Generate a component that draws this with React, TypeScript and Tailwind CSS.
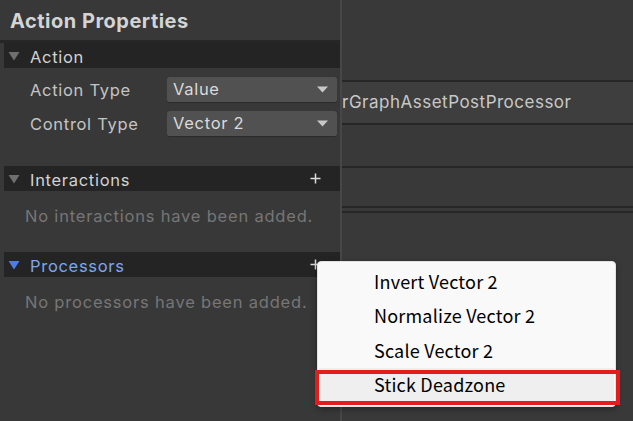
import React from "react";

const Tri = ({ color }: { color: string }) => (
  <svg width="12" height="10" viewBox="0 0 12 10" className="shrink-0">
    <path d="M0.5 1 L11.5 1 L6 9.5 Z" fill={color} />
  </svg>
);

const Plus = () => (
  <svg width="11" height="11" viewBox="0 0 11 11" className="shrink-0">
    <path d="M5.5 0.5 V10.5 M0.5 5.5 H10.5" stroke="#dcdcdc" strokeWidth="1.5" />
  </svg>
);

const SectionHeader = ({
  title,
  blue,
  plus,
}: {
  title: string;
  blue?: boolean;
  plus?: boolean;
}) => (
  <div className="ml-[4px] flex h-[25px] items-center bg-[#242424] pl-[4px] pr-[19px]">
    <Tri color={blue ? "#4c7de0" : "#6f6f6f"} />
    <span
      className={`ml-[10px] flex-1 pt-[3px] text-[16.5px] leading-none tracking-[0.7px] ${
        blue ? "text-[#7da6ee]" : "text-[#d2d2d2]"
      }`}
    >
      {title}
    </span>
    {plus && <Plus />}
  </div>
);

const Dropdown = ({ label, value }: { label: string; value: string }) => (
  <div className="flex h-[26px] items-center pl-[30px] pr-[3px]">
    <span className="w-[137px] text-[16.5px] tracking-[0.7px] text-[#c4c4c4]">{label}</span>
    <div className="flex h-[26px] flex-1 items-center justify-between rounded-[3px] border-b border-[#2a2a2a] bg-[#515151] pl-[6px] pr-[9px]">
      <span className="text-[16.5px] tracking-[0.7px] text-[#dadada]">{value}</span>
      <svg width="11" height="7" viewBox="0 0 11 7">
        <path d="M0 0.5 H11 L5.5 6.5 Z" fill="#c8c8c8" />
      </svg>
    </div>
  </div>
);

const items = ["Invert Vector 2", "Normalize Vector 2", "Scale Vector 2", "Stick Deadzone"];

export default function App() {
  return (
    <div
      className="relative flex h-[421px] w-[633px] overflow-hidden bg-[#383838]"
      style={{ fontFamily: "Inter, 'Noto Sans', sans-serif" }}
    >
      {/* left inspector */}
      <div className="flex w-[340px] shrink-0 flex-col">
        <div className="flex h-[40px] items-center pl-[10px] pt-[2px] text-[20px] font-bold tracking-[0.5px] text-[#d4d4d4]">
          Action Properties
        </div>
        <div className="h-[3px] bg-[#262626]" />
        <SectionHeader title="Action" />
        <div className="mt-[9px] flex flex-col gap-[8px]">
          <Dropdown label="Action Type" value="Value" />
          <Dropdown label="Control Type" value="Vector 2" />
        </div>
        <div className="mt-[29px]">
          <SectionHeader title="Interactions" plus />
        </div>
        <div className="flex h-[48px] items-center pl-[25px] pt-[2px] text-[16.5px] tracking-[0.8px] text-[#767676]">
          No interactions have been added.
        </div>
        <div className="mt-[13px]">
          <SectionHeader title="Processors" blue plus />
        </div>
        <div className="flex h-[48px] items-center pl-[25px] pt-[3px] text-[16.5px] tracking-[0.8px] text-[#767676]">
          No processors have been added.
        </div>
      </div>

      <div className="w-[2px] shrink-0 bg-[#474747]" />

      {/* right area */}
      <div className="flex flex-1 flex-col">
        <div className="h-[80px] bg-[#393939]" />
        <div className="h-[2px] bg-[#262626]" />
        <div className="flex h-[41px] items-center bg-[#3e3e3e] text-[17px] tracking-[0.5px] text-[#c8c8c8] whitespace-nowrap">
          rGraphAssetPostProcessor
        </div>
        <div className="h-[2px] bg-[#262626]" />
        <div className="h-[41px] bg-[#393939]" />
        <div className="h-[2px] bg-[#262626]" />
        <div className="h-[38px] bg-[#393939]" />
        <div className="h-[2px] bg-[#262626]" />
        <div className="h-[3px] bg-[#393939]" />
        <div className="h-[2px] bg-[#262626]" />
        <div className="flex-1 bg-[#393939]" />
      </div>

      {/* context menu */}
      <div
        className="absolute left-[317px] top-[261px] flex w-[299px] flex-col rounded-[4px] border border-[#e2e2e2] bg-[#f9f9f9] pt-[2px] pb-[4px] shadow-[0_2px_6px_rgba(0,0,0,0.35)]"
        style={{ fontFamily: "'Noto Sans CJK SC', 'Noto Sans', sans-serif" }}
      >
        {items.map((it, i) => (
          <div
            key={it}
            className={`mx-[1px] flex h-[34.5px] items-center pl-[55px] text-[18px] tracking-[0.2px] text-black ${
              i === 3 ? "bg-[#efefef]" : ""
            }`}
          >
            {it}
          </div>
        ))}
      </div>
      {/* red highlight box */}
      <div className="absolute left-[315px] top-[370px] h-[35px] w-[305px] border-[4px] border-[#e51c1c]" />
    </div>
  );
}
